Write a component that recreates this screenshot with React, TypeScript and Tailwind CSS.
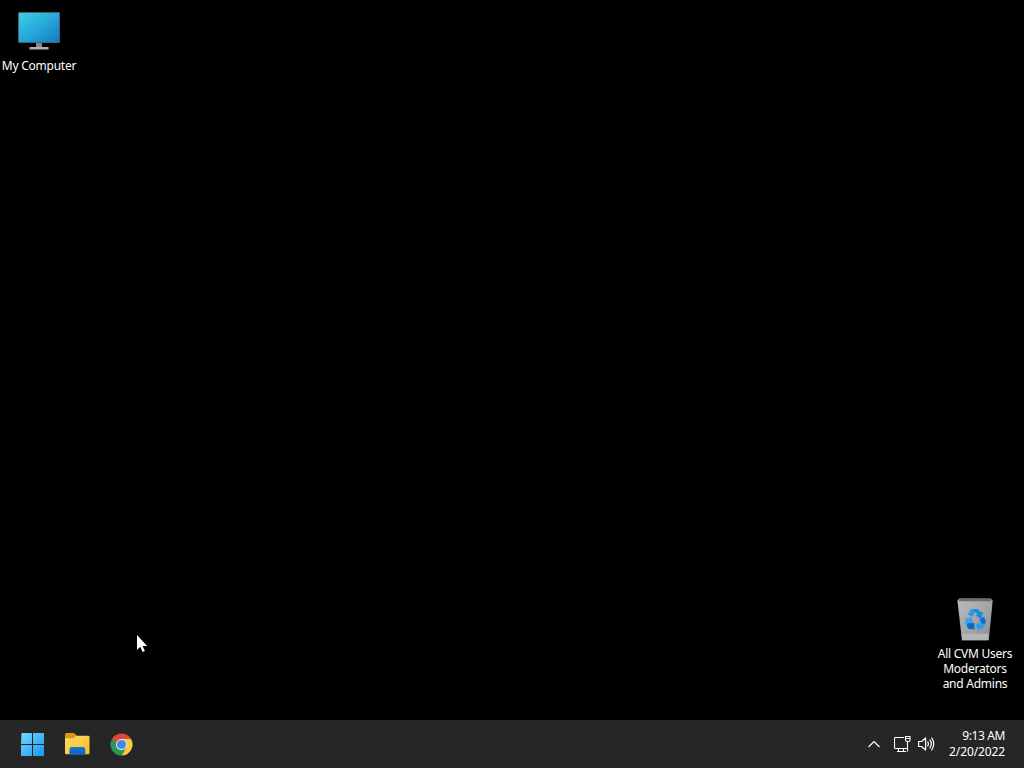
import type { ReactNode } from "react";

function ComputerIcon() {
  return (
    <svg width="42" height="39" viewBox="0 0 42 39" fill="none">
      <defs>
        <linearGradient id="screen" x1="0" y1="0" x2="1" y2="1">
          <stop offset="0" stopColor="#3ad0e4" />
          <stop offset="0.5" stopColor="#27a8d8" />
          <stop offset="1" stopColor="#1479c6" />
        </linearGradient>
      </defs>
      <rect width="42" height="31" rx="0.8" fill="#41616d" />
      <rect x="1" y="1" width="40" height="29" fill="url(#screen)" />
      <path d="M18 31h6v4h-6z" fill="#85888b" />
      <path d="M11.5 35h19v2.5h-19z" fill="#b5b1ae" />
    </svg>
  );
}

function RecycleBinIcon() {
  return (
    <svg width="36" height="43" viewBox="0 0 36 43" fill="none">
      <defs>
        <linearGradient id="bin" x1="0" y1="0" x2="1" y2="1">
          <stop offset="0" stopColor="#bbbcbd" />
          <stop offset="0.5" stopColor="#a5a6a7" />
          <stop offset="1" stopColor="#8c8e90" />
        </linearGradient>
      </defs>
      <path d="M0.4 2.4L2.5 0.4h31l2.2 2L31.8 42.3H5z" fill="url(#bin)" />
      <path d="M2.8 0.8h30.4l1.3 2.4H1.5z" fill="#6b6e70" />
      <path d="M4.6 35.5l26.9 0.2-0.3 6.6H5z" fill="#b4b5b6" />
      <path d="M14.3 11.2l6.2-.3 3.1 3.3 2.4-.8-1.6 7-6-2.7 2.1-1.1-2.2-2.5z" fill="#168ae1" />
      <path d="M14.3 11.2l4 2.9-2.8 4.6-5-2.1z" fill="#3298e7" />
      <path d="M8 20.5l6.8-1.2 1.2 6-2-.8-2.7 5.2-3.9-4.6 1.6-2.8z" fill="#3f9fe9" />
      <path d="M11.8 25.3l5.5-.2.3 6.2-5.9-.4-2.3-3.5z" fill="#0c68c8" />
      <path d="M18.6 27.4l3.4-3.8.1 2h3.2l3 .1-3 5.4-3.4.2-.1 2.3z" fill="#309ce9" />
      <path d="M22.4 20.7l4.7-2 2 5-1.5 2.3-3.3-.5z" fill="#0971d1" />
    </svg>
  );
}

function WindowsIcon() {
  return (
    <svg width="24" height="24" viewBox="0 0 24 24">
      <defs>
        <linearGradient id="win" gradientUnits="userSpaceOnUse" x1="0" y1="0" x2="24" y2="24">
          <stop offset="0" stopColor="#79daff" />
          <stop offset="1" stopColor="#1599ee" />
        </linearGradient>
      </defs>
      <path d="M1.5 1H12v11H1zM13 1h10.5l.5.5V12H13zM1 13h11v11H1.5l-.5-.5zM13 13h11v10.5l-.5.5H13z" fill="url(#win)" />
    </svg>
  );
}

function FolderIcon() {
  return (
    <svg width="25" height="22" viewBox="0 0 25 22">
      <defs>
        <linearGradient id="folder" x1="0" y1="0" x2="1" y2="1">
          <stop offset="0" stopColor="#ffdc69" />
          <stop offset="1" stopColor="#f7bd25" />
        </linearGradient>
        <linearGradient id="pocket" x1="0" y1="0" x2="0" y2="1">
          <stop offset="0" stopColor="#127ad0" />
          <stop offset="1" stopColor="#0d63b4" />
        </linearGradient>
      </defs>
      <path d="M0 1.5Q0 0 1.5 0h6.6q.8 0 1.4.6L12 3v4H0z" fill="#d99b16" />
      <path d="M0 5.3h7.8q.8 0 1.4-.6l1.5-1.5q.5-.5 1.2-.5h11.3q1.3 0 1.3 1.3V20q0 1.3-1.3 1.3H1.3Q0 21.300 0 20z" fill="url(#folder)" />
      <path d="M4.5 22v-6q0-2 2-2h11.7q2 0 2 2v6z" fill="url(#pocket)" />
    </svg>
  );
}

function ChromeIcon() {
  return (
    <svg width="23" height="23" viewBox="0 0 48 48">
      <path d="M24 24L4.080 12.5A23 23 0 0 1 43.92 12.5H24z" fill="#e0473b" />
      <path d="M24 24V12.5h19.92A23 23 0 0 1 24 47l9.96-17.25z" fill="#fbcb3d" />
      <path d="M24 24l9.96 5.75L24 47A23 23 0 0 1 4.08 12.5l9.96 17.25z" fill="#279b50" />
      <path d="M4.08 12.5l9.96 17.25L24 12.5z" fill="#e0473b" />
      <path d="M4.08 12.5l9.96 17.25L14 18z" fill="#279b50" />
      <circle cx="24" cy="24" r="11.5" fill="#e3e9f1" />
      <circle cx="24" cy="24" r="9.5" fill="#4388e9" />
    </svg>
  );
}

function DesktopIcon({ icon, lines, className }: { icon: ReactNode; lines: string[]; className: string }) {
  return (
    <div className={`absolute flex w-[78px] flex-col items-center ${className}`}>
      {icon}
      <div className="text-center text-[12px] leading-[15px] tracking-[-0.25px] whitespace-nowrap">
        {lines.map((line) => (
          <div key={line}>{line}</div>
        ))}
      </div>
    </div>
  );
}

export default function App() {
  return (
    <div className="relative flex h-screen w-full flex-col overflow-hidden bg-black font-['Noto_Sans','Open_Sans',sans-serif] text-white select-none">
      <main className="relative flex-1">
        <DesktopIcon className="top-3 left-0 gap-[7px]" icon={<ComputerIcon />} lines={["My Computer"]} />
        <DesktopIcon
          className="top-[598px] left-[936px] gap-[5px]"
          icon={<RecycleBinIcon />}
          lines={["All CVM Users", "Moderators", "and Admins"]}
        />
        <svg className="absolute top-[634px] left-[136px]" width="12" height="19" viewBox="0 0 12 19">
          <path d="M1 1v15l3.3-3.2 2.3 5.2 2.3-1-2.3-5h4.5z" fill="#fff" />
        </svg>
      </main>

      <footer className="flex h-12 items-center justify-between bg-[#262626] pr-[19px] pl-5">
        <div className="flex items-center gap-5">
          <button type="button" aria-label="Start">
            <WindowsIcon />
          </button>
          <button type="button" aria-label="File Explorer" className="ml-px">
            <FolderIcon />
          </button>
          <button type="button" aria-label="Chrome" className="-ml-[0.5px]">
            <ChromeIcon />
          </button>
        </div>

        <div className="flex items-center">
          <svg className="mr-3.5" width="12" height="8" viewBox="0 0 12 8" fill="none" stroke="#fff" strokeWidth="1.2">
            <path d="M.5 7L6 1.5 11.5 7" />
          </svg>
          <svg className="mr-[7px]" width="17" height="17" viewBox="0 0 17 17" fill="none" stroke="#fff" strokeWidth="1.1">
            <path d="M10 1.5H1.5q-1 0-1 1v9q0 1 1 1h12M4.5 12.5v3M9.5 12.5v3M3 15.5h9" />
            <path d="M11.5.5h4.5v3.5q0 1.5-1.5 1.5h-1.5q-1.5 0-1.5-1.5zM11.5 2.5H16M13.5 5.5v10" />
          </svg>
          <svg className="mr-3.5" width="17" height="16" viewBox="0 0 17 16" fill="none" stroke="#fff" strokeWidth="1.2" strokeLinejoin="round">
            <path d="M.6 5.5h3l4-3.5v12l-4-3.5h-3z" />
            <path d="M9.5 5.7q1.8 2.3 0 4.6M11.7 3.7q3.3 4.3 0 8.6M13.5 1.700q4.5 6.3 0 12.6" />
          </svg>
          <div className="w-14 text-right text-[12px] leading-4 whitespace-nowrap">
            <div className="tracking-[-0.4px]">9:13 AM</div>
            <div className="tracking-[-0.1px]">2/20/2022</div>
          </div>
        </div>
      </footer>
    </div>
  );
}
